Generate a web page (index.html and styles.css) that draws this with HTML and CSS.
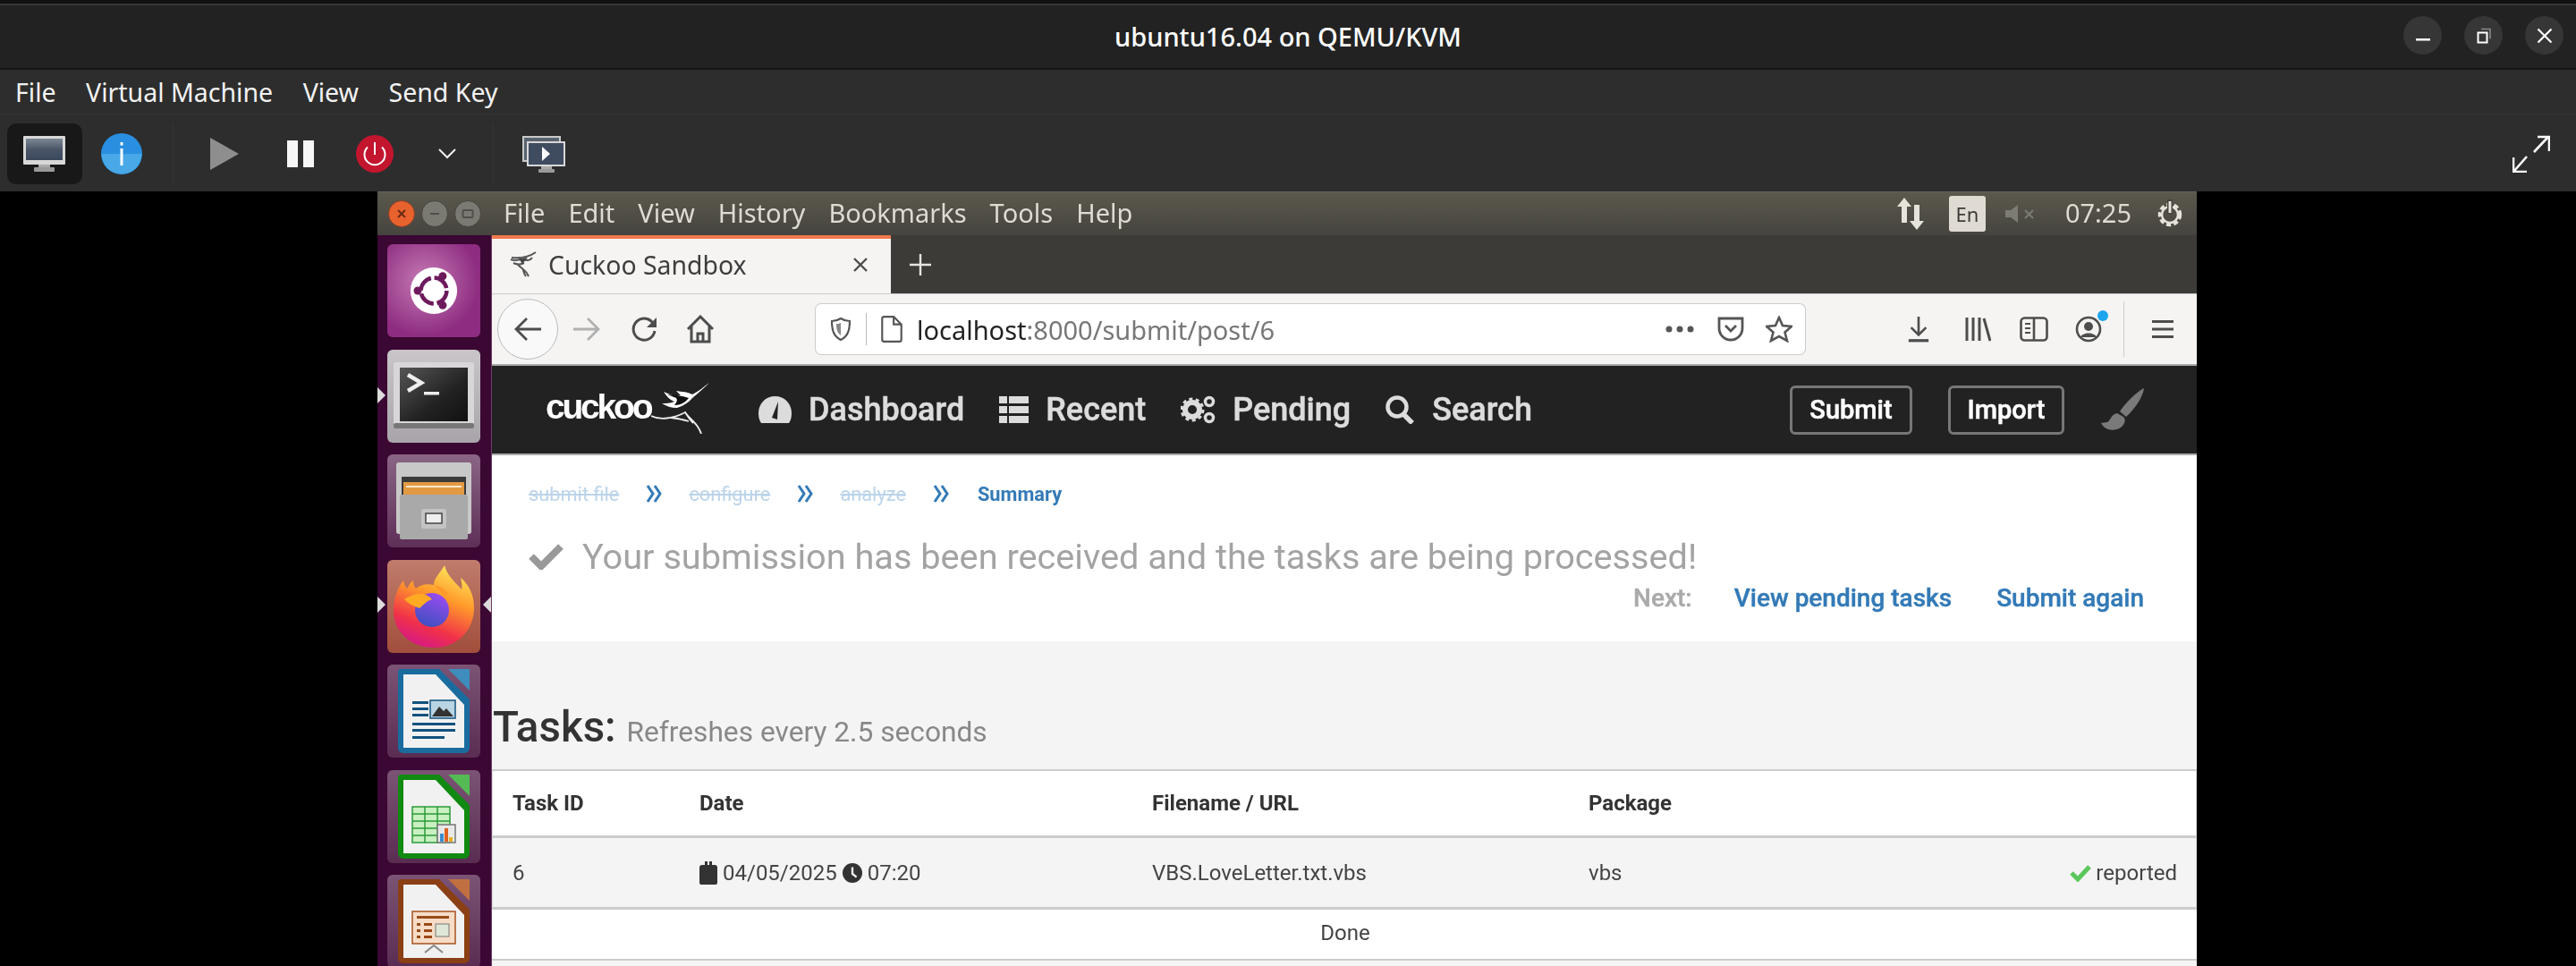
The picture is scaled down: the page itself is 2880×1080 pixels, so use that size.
FILE: index.html
```html
<!DOCTYPE html>
<html lang="en">
<head>
<meta charset="utf-8">
<title>ubuntu16.04 on QEMU/KVM</title>
<link rel="stylesheet" href="styles.css">
</head>
<body>
<div class="app">
  <header class="titlebar">
    <div class="title">ubuntu16.04 on QEMU/KVM</div>
    <div class="winbtns">
      <span class="winbtn"><svg width="20" height="20" viewBox="0 0 20 20"><rect x="2" y="13" width="16" height="2.5" fill="#fff"/></svg></span>
      <span class="winbtn"><svg width="20" height="20" viewBox="0 0 20 20"><path d="M7 2.5h10v11" fill="none" stroke="#8a8a8a" stroke-width="1.6"/><rect x="3.5" y="6.5" width="10" height="11" fill="none" stroke="#fff" stroke-width="2"/></svg></span>
      <span class="winbtn"><svg width="20" height="20" viewBox="0 0 20 20"><path d="M2.5 2.5l15 15M17.5 2.5l-15 15" stroke="#fff" stroke-width="2.2"/></svg></span>
    </div>
  </header>
  <nav class="menubar">
    <span>File</span><span>Virtual Machine</span><span>View</span><span>Send Key</span>
  </nav>
  <div class="toolbar">
    <span class="tb tb-active">
      <svg width="48" height="40" viewBox="0 0 48 40"><defs><linearGradient id="scr" x1="0" y1="0" x2="0" y2="1"><stop offset="0" stop-color="#7d8794"/><stop offset=".5" stop-color="#4a5668"/><stop offset="1" stop-color="#3a465a"/></linearGradient></defs><rect x="0" y="0" width="47" height="32" rx="1" fill="#d8d8d8"/><rect x="3" y="3" width="41" height="24" fill="url(#scr)"/><rect x="17" y="32" width="13" height="4" fill="#aaa"/><rect x="12" y="35" width="23" height="5" rx="1" fill="#999"/></svg>
    </span>
    <span class="tb tb-info">
      <svg width="46" height="46" viewBox="0 0 46 46"><circle cx="23" cy="23" r="23" fill="#2a8fe0"/><path d="M0.5 23h45a22.500 22.500 0 0 1-45 0z" fill="#48a8e8"/><rect x="21.500" y="17" width="3" height="19" fill="#fff"/><rect x="21.500" y="10" width="3" height="3.500" fill="#fff"/></svg>
    </span>
    <span class="tb-sep tb-sep1"></span>
    <span class="tb tb-play"><svg width="32" height="36" viewBox="0 0 32 36"><path d="M0 0l32 18L0 36z" fill="#8e8e8e"/></svg></span>
    <span class="tb tb-pause"><svg width="30" height="30" viewBox="0 0 30 30"><rect width="12" height="30" fill="#f6f6f6"/><rect x="18" width="12" height="30" fill="#f6f6f6"/></svg></span>
    <span class="tb tb-power"><svg width="42" height="42" viewBox="0 0 42 42"><circle cx="21" cy="21" r="21" fill="#c4152f"/><path d="M13 13.500a11.500 11.500 0 1 0 16 0" fill="none" stroke="#fff" stroke-width="2"/><path d="M21 8v14" stroke="#fff" stroke-width="2"/></svg></span>
    <span class="tb tb-chev"><svg width="20" height="12" viewBox="0 0 20 12"><path d="M1 1l9 9 9-9" fill="none" stroke="#eee" stroke-width="2"/></svg></span>
    <span class="tb-sep tb-sep2"></span>
    <span class="tb tb-mon">
      <svg width="48" height="41" viewBox="0 0 48 41"><rect x="0" y="0" width="43" height="29" fill="#c9c9c9"/><rect x="2" y="2" width="39" height="25" fill="#59626f"/><rect x="5" y="6" width="43" height="28" fill="#d8d8d8"/><rect x="7" y="8" width="39" height="24" fill="#3f4c60"/><path d="M22 12l9 8-9 8z" fill="#fff"/><rect x="21" y="34" width="12" height="3" fill="#aaa"/><rect x="18" y="37" width="18" height="4" rx="1" fill="#999"/></svg>
    </span>
    <span class="tb tb-full"><svg width="42" height="42" viewBox="0 0 42 42"><path d="M24 19L39 3M28 2h13v16M16 24L2 40M1 25v16h15" fill="none" stroke="#fff" stroke-width="2.600"/></svg></span>
  </div>
  <main class="stage">
    <section class="guest">
      <div class="panel">
        <div class="wm">
          <span class="wm-btn wm-close"><svg width="12" height="12" viewBox="0 0 12 12"><path d="M2 2l8 8M10 2l-8 8" stroke="#6b2a12" stroke-width="2"/></svg></span>
          <span class="wm-btn"><svg width="12" height="12" viewBox="0 0 12 12"><rect x="1" y="5" width="10" height="2" fill="#4f4e48"/></svg></span>
          <span class="wm-btn"><svg width="14" height="12" viewBox="0 0 14 12"><rect x="1.500" y="2" width="11" height="8" rx="1" fill="none" stroke="#4f4e48" stroke-width="2"/></svg></span>
        </div>
        <div class="panel-menu"><span>File</span><span>Edit</span><span>View</span><span>History</span><span>Bookmarks</span><span>Tools</span><span>Help</span></div>
        <div class="indicators">
          <svg class="ind-net" width="32" height="36" viewBox="0 0 32 36"><path d="M9 0l8 10h-5v18H6V10H1zM23 36l-8-10h5V8h6v18h5z" fill="#e6e3da"/></svg>
          <span class="ind-en">En</span>
          <svg class="ind-snd" width="36" height="24" viewBox="0 0 36 24"><path d="M0 8h6l8-6v20l-8-6H0z" fill="#7c7b74"/><path d="M22 8l9 9M31 8l-9 9" stroke="#7c7b74" stroke-width="2"/></svg>
          <span class="ind-time">07:25</span>
          <svg class="ind-gear" width="32" height="36" viewBox="0 0 32 36"><circle cx="16" cy="19" r="11" fill="none" stroke="#e6e3da" stroke-width="4.500" stroke-dasharray="5 3"/><circle cx="16" cy="19" r="9" fill="none" stroke="#e6e3da" stroke-width="2.500"/><rect x="13" y="2" width="6" height="16" fill="#45443e"/><rect x="14.500" y="4" width="3" height="13" fill="#e6e3da"/></svg>
        </div>
      </div>
      <div class="guest-body">
        <aside class="launcher">
          <div class="tile tile-ubuntu">
            <svg width="56" height="54" viewBox="0 0 60 60"><circle cx="30" cy="30" r="29" fill="#fff"/><circle cx="30" cy="30" r="16" fill="none" stroke="#6d1a5d" stroke-width="5" stroke-dasharray="21 4.200"/><circle cx="10" cy="30" r="5" fill="#6d1a5d"/><circle cx="41" cy="12" r="5" fill="#6d1a5d"/><circle cx="41" cy="48" r="5" fill="#6d1a5d"/></svg>
          </div>
          <div class="tile tile-term">
            <svg width="90" height="76" viewBox="0 0 90 76"><defs><linearGradient id="tg" x1="0" y1="0" x2="1" y2="1"><stop offset="0" stop-color="#555"/><stop offset=".6" stop-color="#222"/><stop offset="1" stop-color="#111"/></linearGradient></defs><rect x="0" y="0" width="90" height="74" rx="3" fill="#d8d6d8"/><rect x="0" y="68" width="90" height="6" rx="2" fill="#777"/><rect x="7" y="6" width="76" height="60" fill="url(#tg)"/><path d="M16 14l15 9-15 9" fill="none" stroke="#eee" stroke-width="4.500"/><rect x="34" y="33" width="17" height="3.500" fill="#eee"/></svg>
          </div>
          <div class="tile tile-files">
            <svg width="84" height="86" viewBox="0 0 84 86"><rect x="0" y="0" width="84" height="80" rx="3" fill="#c8c8c8"/><rect x="6" y="16" width="72" height="26" fill="#3a3a3a"/><rect x="8" y="22" width="68" height="18" fill="#e29a42"/><rect x="11" y="26" width="62" height="2" fill="#fae8cc"/><rect x="4" y="36" width="76" height="50" rx="2" fill="#a9a9a9"/><rect x="28" y="52" width="28" height="22" rx="3" fill="#c4c4c4"/><rect x="33" y="57" width="18" height="11" fill="#eee" stroke="#444" stroke-width="1.500"/></svg>
          </div>
          <div class="tile tile-fox">
            <svg width="90" height="92" viewBox="0 0 90 92"><defs><linearGradient id="fx" x1=".8" y1="0" x2=".4" y2="1"><stop offset="0" stop-color="#ffee60"/><stop offset=".4" stop-color="#ff9a2a"/><stop offset=".78" stop-color="#f0304a"/><stop offset="1" stop-color="#d81b80"/></linearGradient><linearGradient id="fg" x1=".7" y1="0" x2=".3" y2="1"><stop offset="0" stop-color="#9a4cf0"/><stop offset="1" stop-color="#3d4fc0"/></linearGradient></defs><path d="M57 0c-5 9-12 14-12 22-9-2-15 0-20 4-3-3-3-6-3-9-4 3-5 6-7 9-3-3-3-6-4-9C3 27 0 40 0 50c0 24 19 42 45 42s45-19 45-45c0-14-6-26-15-33 1 5 2 9 1 13C70 20 60 12 57 0z" fill="url(#fx)"/><circle cx="43" cy="50" r="19" fill="url(#fg)"/><path d="M12 38c8-5 13-6 18-6 7 0 11 4 13 6-7 2-10 7-14 10-6-2-12-5-17-10z" fill="#ffab22"/><path d="M45 22c8 1 15 6 18 14l-8-3c-3-5-7-8-10-11z" fill="#ff9a2a"/></svg>
          </div>
          <div class="tile tile-doc">
            <svg width="80" height="94" viewBox="0 0 80 94"><path d="M2 0h44l34 34v54a6 6 0 0 1-6 6H6a6 6 0 0 1-6-6V2z" fill="#1a6c9f"/><path d="M6 6h36l32 34v48H6z" fill="#f1f1f1"/><path d="M56 0h24v24z" fill="#3e8dbc"/><path d="M16 36h18v3H16zM16 43h18v3H16zM16 50h18v3H16zM16 60h48v3H16zM16 67h48v3H16zM16 75h36v3H16z" fill="#11527e"/><rect x="36" y="35" width="28" height="20" fill="#b9d4e3" stroke="#11527e" stroke-width="1.500"/><path d="M38 53l8-11 5 5 3-3 8 9z" fill="#333"/></svg>
          </div>
          <div class="tile tile-doc">
            <svg width="80" height="94" viewBox="0 0 80 94"><path d="M2 0h44l34 34v54a6 6 0 0 1-6 6H6a6 6 0 0 1-6-6V2z" fill="#108a10"/><path d="M6 6h36l32 34v48H6z" fill="#f1f1f1"/><path d="M56 0h24v24z" fill="#54bb54"/><rect x="16" y="36" width="42" height="40" fill="#c8f0c0" stroke="#2a9a3a" stroke-width="1.500"/><path d="M16 44h42M16 52h42M16 60h42M16 68h42M30 36v40M44 36v40" stroke="#2a9a3a" stroke-width="1.500"/><rect x="44" y="56" width="20" height="20" fill="#e8e8e8" stroke="#777" stroke-width="1.500"/><rect x="47" y="66" width="4" height="9" fill="#3a8fd0"/><rect x="52" y="60" width="4" height="15" fill="#e06020"/><rect x="57" y="70" width="4" height="5" fill="#e8b020"/></svg>
          </div>
          <div class="tile tile-doc">
            <svg width="80" height="94" viewBox="0 0 80 94"><path d="M2 0h44l34 34v54a6 6 0 0 1-6 6H6a6 6 0 0 1-6-6V2z" fill="#8a3f14"/><path d="M6 6h36l32 34v48H6z" fill="#f1f1f1"/><path d="M56 0h24v24z" fill="#c07040"/><rect x="16" y="36" width="48" height="36" fill="#f6ddc8" stroke="#a9521e" stroke-width="1.500"/><path d="M21 41h36v3H21zM21 49h4v3h-4zM29 49h9v3h-9zM21 56h4v3h-4zM29 56h9v3h-9zM21 63h4v3h-4zM29 63h9v3h-9z" fill="#9a4a1a"/><rect x="42" y="50" width="15" height="14" fill="#dfe8d8" stroke="#777"/><path d="M30 82l10-8 10 8" fill="none" stroke="#888" stroke-width="2"/></svg>
          </div>
          <i class="pip pip-term"></i>
          <i class="pip pip-fox"></i>
          <i class="pip-r"></i>
        </aside>
        <div class="browser">
          <div class="tabstrip">
            <div class="tab">
              <svg class="fav" width="30" height="30" viewBox="0 0 30 30"><path d="M29 1C22 6 14 8 2 7M12 9C8 10 5 11 1 9M4 13c4 2 8 2 12 0M16 9c3 2 7 1 9-2M9 15c4 4 9 6 12 13M14 19c2 3 1 5 4 9" fill="none" stroke="#555" stroke-width="2"/><path d="M10 8l10-1-6 7z" fill="#444"/></svg>
              <span class="tab-title">Cuckoo Sandbox</span>
              <svg class="tab-x" width="20" height="20" viewBox="0 0 20 20"><path d="M3 3l14 14M17 3L3 17" stroke="#4d4d4d" stroke-width="2.400"/></svg>
            </div>
            <svg class="plus" width="26" height="26" viewBox="0 0 26 26"><path d="M13 1v24M1 13h24" stroke="#e4e4e0" stroke-width="2.400"/></svg>
          </div>
          <div class="navbar">
            <span class="back"><svg width="32" height="28" viewBox="0 0 32 28"><path d="M31 14H3M15 2L3 14l12 12" fill="none" stroke="#4d4d4d" stroke-width="2.800"/></svg></span>
            <svg class="nv-fwd" width="32" height="28" viewBox="0 0 32 28"><path d="M1 14h28M17 2l12 12-12 12" fill="none" stroke="#b0b0b0" stroke-width="2.800"/></svg>
            <svg class="nv-rel" width="30" height="30" viewBox="0 0 30 30"><path d="M26 17a12 12 0 1 1-4-11l5 5" fill="none" stroke="#4d4d4d" stroke-width="3"/><path d="M28 2v11H17z" fill="#4d4d4d"/></svg>
            <svg class="nv-home" width="32" height="32" viewBox="0 0 32 32"><path d="M2 16L16 2l14 14M6 13v17h20V13M13 30v-9h6v9" fill="none" stroke="#4d4d4d" stroke-width="3"/></svg>
            <div class="urlbar">
              <svg class="u-shield" width="22" height="26" viewBox="0 0 22 26"><path d="M11 1C8 3 4 4 1 4c0 10 2 17 10 21 8-4 10-11 10-21-3 0-7-1-10-3z" fill="none" stroke="#555" stroke-width="2.200"/><path d="M11 6c-2 1-3 1-5 1 0 6 1 10 5 13z" fill="#888"/></svg>
              <i class="u-sep"></i>
              <svg class="u-file" width="24" height="30" viewBox="0 0 22 28"><path d="M3 1h10l8 8v16a2 2 0 0 1-2 2H3a2 2 0 0 1-2-2V3a2 2 0 0 1 2-2zM13 1v8h8" fill="none" stroke="#555" stroke-width="2"/></svg>
              <span class="u-text"><b>localhost</b>:8000/submit/post/6</span>
              <svg class="u-dots" width="32" height="8" viewBox="0 0 32 8"><circle cx="4" cy="4" r="3.500" fill="#555"/><circle cx="16" cy="4" r="3.500" fill="#555"/><circle cx="28" cy="4" r="3.500" fill="#555"/></svg>
              <svg class="u-pocket" width="30" height="28" viewBox="0 0 30 28"><path d="M2 2h26v11a13 13 0 0 1-26 0z" fill="none" stroke="#555" stroke-width="2.800"/><path d="M9 10l6 6 6-6" fill="none" stroke="#555" stroke-width="2.800"/></svg>
              <svg class="u-star" width="30" height="30" viewBox="0 0 30 30"><path d="M15 2l4 9 10 1-7.500 6.500L24 28l-9-5-9 5 2.500-9.500L1 12l10-1z" fill="none" stroke="#555" stroke-width="2.600"/></svg>
            </div>
            <svg class="r-dl" width="26" height="32" viewBox="0 0 28 32"><path d="M14 1v21M5 14l9 9 9-9" fill="none" stroke="#4d4d4d" stroke-width="2.800"/><rect x="2" y="28" width="24" height="3.500" fill="#4d4d4d"/></svg>
            <svg class="r-lib" width="30" height="28" viewBox="0 0 30 28"><path d="M3 1v26M10 1v26M17 1v26M22 2l7 25" fill="none" stroke="#4d4d4d" stroke-width="3"/></svg>
            <svg class="r-side" width="32" height="28" viewBox="0 0 32 28"><rect x="1.500" y="1.500" width="29" height="25" rx="4" fill="none" stroke="#4d4d4d" stroke-width="2.600"/><path d="M16 2v24" stroke="#4d4d4d" stroke-width="2.600"/><path d="M6 8h6M6 13h6M6 18h6" stroke="#4d4d4d" stroke-width="2"/></svg>
            <span class="r-acct"><svg width="30" height="30" viewBox="0 0 30 30"><circle cx="15" cy="15" r="13" fill="none" stroke="#4d4d4d" stroke-width="2.600"/><circle cx="15" cy="12" r="5" fill="#4d4d4d"/><path d="M6 24c2-6 16-6 18 0z" fill="#4d4d4d"/></svg><i class="dot"></i></span>
            <i class="r-sep"></i>
            <svg class="r-menu" width="24" height="22" viewBox="0 0 24 22"><path d="M0 2.500h24M0 11h24M0 19.500h24" stroke="#4d4d4d" stroke-width="3"/></svg>
          </div>
          <div class="page">
            <div class="site-head">
              <div class="logo">
                <span class="logo-text">cuckoo</span>
                <svg class="logo-bird" width="66" height="58" viewBox="0 0 66 58"><path d="M65 1C58 6 54 10 46 14 40 11 34 11 28 10l5 5-5 1c-5-1-9-3-14-5 3 5 7 9 12 11-5 2-9 2-14 2 5 3 10 5 17 5 6-2 12-5 17-11 7-6 13-11 19-17z" fill="#fff"/><path d="M18 14c8 1 16 1 24 4-4 5-9 8-16 8 2-3 4-5 2-8z" fill="#111"/><path d="M0 38c10 5 25 3 38-4 4 6 10 10 14 16 2 3 3 5 4 8M38 34c3 5 5 8 9 12M22 40c8 1 14 2 20 4" fill="none" stroke="#eee" stroke-width="1.800"/></svg>
              </div>
              <nav class="site-nav">
                <a class="nv"><svg width="37" height="30" viewBox="0 0 37 30"><path d="M18.500 0C8 0 0 8 0 19c0 5 1 8 3 11h31c2-3 3-6 3-11C37 8 29 0 18.500 0z" fill="#dcdcdc"/><path d="M22 6l-7 18 6 2z" fill="#222"/></svg>Dashboard</a>
                <a class="nv"><svg width="33" height="30" viewBox="0 0 33 30"><path d="M0 0h9v8H0zM11 0h22v8H11zM0 11h9v8H0zM11 11h22v8H11zM0 22h9v8H0zM11 22h22v8H11z" fill="#dcdcdc"/></svg>Recent</a>
                <a class="nv"><svg width="39" height="32" viewBox="0 0 39 32"><circle cx="13" cy="16" r="8" fill="none" stroke="#dcdcdc" stroke-width="6"/><circle cx="13" cy="16" r="12" fill="none" stroke="#dcdcdc" stroke-width="3" stroke-dasharray="4 3.500"/><circle cx="32" cy="7" r="4.500" fill="none" stroke="#dcdcdc" stroke-width="3.500"/><circle cx="32" cy="25" r="4.500" fill="none" stroke="#dcdcdc" stroke-width="3.500"/></svg>Pending</a>
                <a class="nv"><svg width="33" height="32" viewBox="0 0 33 32"><circle cx="13" cy="13" r="10.500" fill="none" stroke="#dcdcdc" stroke-width="4.500"/><path d="M20 21l10 10" stroke="#dcdcdc" stroke-width="5.500"/></svg>Search</a>
              </nav>
              <div class="head-actions">
                <a class="hbtn hbtn-submit">Submit</a>
                <a class="hbtn hbtn-import">Import</a>
                <svg class="brush" width="50" height="48" viewBox="0 0 50 48"><path d="M49 0C44 2 30 14 22 26l7 6C38 24 48 10 49 0z" fill="#7a7a7a"/><path d="M19 28C12 29 12 36 8 38l-7 1c4 8 14 10 22 5 5-4 6-9 3-12z" fill="#7a7a7a"/></svg>
              </div>
            </div>
            <div class="summary">
              <div class="crumbs">
                <s>submit file</s><svg class="chev" width="18" height="22" viewBox="0 0 18 22"><path d="M2 2l6 9-6 9M10 2l6 9-6 9" fill="none" stroke="#337ab7" stroke-width="3"/></svg><s>configure</s><svg class="chev" width="18" height="22" viewBox="0 0 18 22"><path d="M2 2l6 9-6 9M10 2l6 9-6 9" fill="none" stroke="#337ab7" stroke-width="3"/></svg><s>analyze</s><svg class="chev chev-last" width="18" height="22" viewBox="0 0 18 22"><path d="M2 2l6 9-6 9M10 2l6 9-6 9" fill="none" stroke="#337ab7" stroke-width="3"/></svg><b>Summary</b>
              </div>
              <h2 class="received"><svg width="39" height="30" viewBox="0 0 39 30"><path d="M3 15l11 11L36 4" fill="none" stroke="#999" stroke-width="8"/></svg>Your submission has been received and the tasks are being processed!</h2>
              <div class="next"><span class="next-l">Next:</span><a>View pending tasks</a><a>Submit again</a></div>
            </div>
            <div class="tasks">
              <h3 class="tasks-h">Tasks: <small>Refreshes every 2.5 seconds</small></h3>
              <div class="grid">
                <div class="row row-head"><span>Task ID</span><span>Date</span><span>Filename / URL</span><span>Package</span><span></span></div>
                <div class="row row-data">
                  <span>6</span>
                  <span class="date"><svg width="20" height="26" viewBox="0 0 20 26"><path d="M3 4h3V0h3v4h2V0h3v4h3a3 3 0 0 1 3 3v17a2 2 0 0 1-2 2H2a2 2 0 0 1-2-2V7a3 3 0 0 1 3-3z" fill="#333"/></svg>04/05/2025<svg width="22" height="24" viewBox="0 0 24 24"><circle cx="12" cy="12" r="12" fill="#333"/><path d="M12 5v8l5 4" fill="none" stroke="#f4f4f4" stroke-width="2.600"/></svg>07:20</span>
                  <span>VBS.LoveLetter.txt.vbs</span>
                  <span>vbs</span>
                  <span class="status"><svg width="24" height="20" viewBox="0 0 24 20"><path d="M2 10l7 7L22 3" fill="none" stroke="#5cc75c" stroke-width="5"/></svg>reported</span>
                </div>
                <div class="row-done">Done</div>
              </div>
            </div>
          </div>
        </div>
      </div>
    </section>
  </main>
</div>
</body>
</html>
```
FILE: styles.css
```css
* { box-sizing: border-box; }
html, body { margin: 0; padding: 0; height: 1080px; overflow: hidden; background: #000; }
body { font-family: "Noto Sans", sans-serif; color: #fff; }
svg { display: block; flex: none; }
.app { display: flex; flex-direction: column; height: 1080px; }

/* host window */
.titlebar { height: 78px; background: #222; border-top: 4px solid #111; box-shadow: inset 0 2px 0 #383838; border-bottom: 2px solid #161616; display: flex; align-items: center; justify-content: center; position: relative; flex: none; }
.title { font-size: 29px; font-weight: 500; color: #fff; }
.winbtns { position: absolute; right: 14px; top: 14px; display: flex; gap: 25px; }
.winbtn { width: 43px; height: 43px; border-radius: 50%; background: #363636; display: flex; align-items: center; justify-content: center; }
.menubar { height: 50px; background: #2d2d2d; display: flex; align-items: center; gap: 33.5px; padding-left: 17px; font-size: 28.5px; color: #f2f2f2; flex: none; border-bottom: 1px solid #333; }
.toolbar { height: 86px; padding-top: 2px; background: #2d2d2d; display: flex; align-items: center; flex: none; }
.tb { display: flex; align-items: center; justify-content: center; }
.tb-active { width: 84px; height: 68px; margin-left: 8px; background: #181818; border-radius: 10px; }
.tb-info { margin-left: 21px; }
.tb-sep { width: 1px; height: 68px; background: #343434; }
.tb-sep1 { margin-left: 34px; }
.tb-play { margin-left: 41px; }
.tb-pause { margin-left: 54px; }
.tb-power { margin-left: 47px; }
.tb-chev { margin-left: 50px; }
.tb-sep2 { margin-left: 41px; }
.tb-mon { margin-left: 32px; }
.tb-full { margin-left: auto; margin-right: 29px; }
.stage { flex: 1; display: flex; justify-content: center; background: #000; min-height: 0; }

/* guest */
.guest { width: 2034px; height: 866px; margin-left: -2px; display: flex; flex-direction: column; overflow: hidden; filter: blur(.55px); }
.panel { height: 49px; flex: none; background: linear-gradient(#5b584d, #45443e); display: flex; align-items: center; border-top: 1px solid #66635a; }
.wm { display: flex; gap: 7px; margin-left: 12px; }
.wm-btn { width: 30px; height: 30px; border-radius: 50%; background: #7b7a72; border: 1px solid #45443e; display: flex; align-items: center; justify-content: center; }
.wm-close { background: #e8622e; border-color: #8d4124; }
.panel-menu { display: flex; gap: 26px; margin-left: 25px; margin-top: -4px; font-size: 29px; color: #dfdbd2; }
.indicators { margin-left: auto; display: flex; align-items: center; }
.ind-net { margin-right: 27px; }
.ind-en { width: 41px; height: 40px; border-radius: 3px; background: #dfdbd2; color: #3c3b37; font-size: 22px; display: flex; align-items: center; justify-content: center; }
.ind-snd { margin-left: 22px; }
.ind-time { margin: -4px 0 0 31px; font-size: 29px; color: #dfdbd2; }
.ind-gear { margin-left: 27px; margin-right: 14px; }
.guest-body { flex: 1; display: flex; min-height: 0; }
.launcher { width: 128px; flex: none; background: #3b0733; display: flex; flex-direction: column; gap: 13.5px; padding: 10px 0 0 11px; position: relative; border-right: 1px solid #6d3f65; overflow: hidden; }
.tile { width: 104px; height: 104px; flex: none; border-radius: 6px; display: flex; align-items: center; justify-content: center; }
.tile-ubuntu { background: radial-gradient(circle at 40% 40%, #c77bb5, #8d2c80 70%); }
.tile-term { background: linear-gradient(#c9c5c9, #a9a4a9); }
.tile-files { background: linear-gradient(#8a6585, #5e2f58); }
.tile-fox { background: linear-gradient(#c07c6c, #a14e3c); }
.tile-doc { background: linear-gradient(#7b5475, #5a2c52); }
.pip { position: absolute; left: 0; width: 0; height: 0; border-left: 9px solid #dcdcdc; border-top: 9px solid transparent; border-bottom: 9px solid transparent; }
.pip-term { top: 170px; }
.pip-fox { top: 404px; }
.pip-r { position: absolute; right: 0; top: 404px; width: 0; height: 0; border-right: 9px solid #dcdcdc; border-top: 9px solid transparent; border-bottom: 9px solid transparent; }

/* browser */
.browser { flex: 1; min-width: 0; display: flex; flex-direction: column; overflow: hidden; background: #fff; }
.tabstrip { height: 65px; flex: none; background: #3c3b37; display: flex; align-items: center; }
.tab { width: 446px; height: 65px; background: #f5f4f3; border-top: 4px solid #f17a4c; display: flex; align-items: center; padding: 0 0 3px 20px; color: #444; }
.tab-title { margin-left: 13px; font-size: 28.4px; color: #3d3d3d; }
.tab-x { margin-left: auto; margin-right: 24px; }
.plus { margin-left: 20px; }
.navbar { height: 81px; flex: none; background: #f5f4f3; border-top: 1px solid #ccc; border-bottom: 2px solid #aaa; display: flex; align-items: center; }
.back { width: 68px; height: 68px; border: 1px solid #bbb; border-radius: 50%; margin-left: 6px; background: #f9f9f9; display: flex; align-items: center; justify-content: center; }
.nv-fwd { margin-left: 16px; }
.nv-rel { margin-left: 34px; }
.nv-home { margin-left: 31px; }
.urlbar { width: 1106px; height: 56px; margin-left: 113px; background: #fff; border-radius: 6px; box-shadow: 0 0 0 1px #ccc; display: flex; align-items: center; }
.u-shield { margin-left: 17px; }
.u-sep { width: 1px; height: 36px; background: #bbb; margin-left: 17px; }
.u-file { margin-left: 16px; }
.u-text { margin-left: 16px; font-size: 29px; color: #777; }
.u-text b { font-weight: 400; color: #222; }
.u-dots { margin-left: auto; }
.u-pocket { margin-left: 26px; }
.u-star { margin-left: 24px; margin-right: 14px; }
.r-dl { margin-left: 114px; }
.r-lib { margin-left: 38px; }
.r-side { margin-left: 32px; }
.r-acct { margin-left: 30px; position: relative; display: block; }
.dot { position: absolute; right: -7px; top: -6px; width: 12px; height: 12px; border-radius: 50%; background: #1fa5ef; }
.r-sep { width: 1px; height: 62px; background: #ccc; margin-left: 24px; }
.r-menu { margin-left: 31px; }

/* cuckoo page */
.page { flex: 1; font-family: Roboto, sans-serif; background: #f4f4f4; }
.site-head { height: 100px; background: #222; border-bottom: 2px solid #aaa; display: flex; align-items: center; }
.logo { display: flex; align-items: center; margin-left: 60px; width: 180px; }
.logo-text { font-family: "Liberation Sans", sans-serif; font-size: 39px; font-weight: 700; letter-spacing: -3.2px; color: #fff; margin-top: -6px; }
.logo-bird { margin-left: 1px; margin-top: -4px; }
.site-nav { display: flex; margin-left: 58px; gap: 39px; }
.nv { display: flex; align-items: center; gap: 19px; font-size: 36px; font-weight: 500; color: #dcdcdc; -webkit-text-stroke: .5px #dcdcdc; }
.head-actions { display: flex; align-items: center; margin-left: auto; margin-right: 58px; }
.hbtn { height: 55px; border: 3px solid #777; border-radius: 6px; font-size: 29px; font-weight: 500; color: #fff; -webkit-text-stroke: .5px #fff; display: flex; align-items: center; justify-content: center; }
.hbtn-submit { width: 137px; }
.hbtn-import { width: 130px; margin-left: 40px; }
.brush { margin-left: 40px; }
.summary { height: 208px; background: #fff; padding: 31px 59px 0 41px; }
.crumbs { display: flex; align-items: center; font-size: 21.8px; height: 24px; }
.crumbs s { color: #bcd4ea; }
.crumbs b { color: #337ab7; font-weight: 700; }
.chev { margin: 0 30px; }
.chev-last { margin-right: 32px; }
.received { margin: 34px 0 0; display: flex; align-items: center; gap: 21px; font-size: 39.7px; font-weight: 400; color: #a3a3a3; height: 48px; }
.next { display: flex; justify-content: flex-end; align-items: center; margin-top: 6px; font-size: 28px; font-weight: 500; color: #337ab7; gap: 50px; -webkit-text-stroke: .4px; }
.next-l { color: #aaa; margin-right: -3px; }
.tasks { background: #f4f4f4; padding-top: 66px; }
.tasks-h { margin: 0 0 0 1px; font-size: 47.5px; font-weight: 500; color: #333; height: 77px; line-height: 60px; }
.tasks-h small { font-size: 31.7px; font-weight: 400; color: #888; }
.grid { font-size: 24px; color: #444; }
.row { display: grid; grid-template-columns: 209px 506px 488px 1fr 300px; padding: 0 21px 0 22px; align-items: center; border-left: 1px solid #ddd; border-right: 1px solid #ddd; }
.row-head { height: 77px; background: #fff; border-top: 2px solid #ccc; border-bottom: 3px solid #ccc; font-weight: 700; color: #333; }
.row-data { height: 80px; background: #f4f4f4; border-bottom: 3px solid #ccc; }
.date { display: flex; align-items: center; gap: 6px; }
.status { display: flex; justify-content: flex-end; align-items: center; gap: 5px; }
.row-done { height: 57px; background: #fff; border-bottom: 2px solid #ccc; padding-left: 2px; text-align: center; line-height: 52px; }
```
